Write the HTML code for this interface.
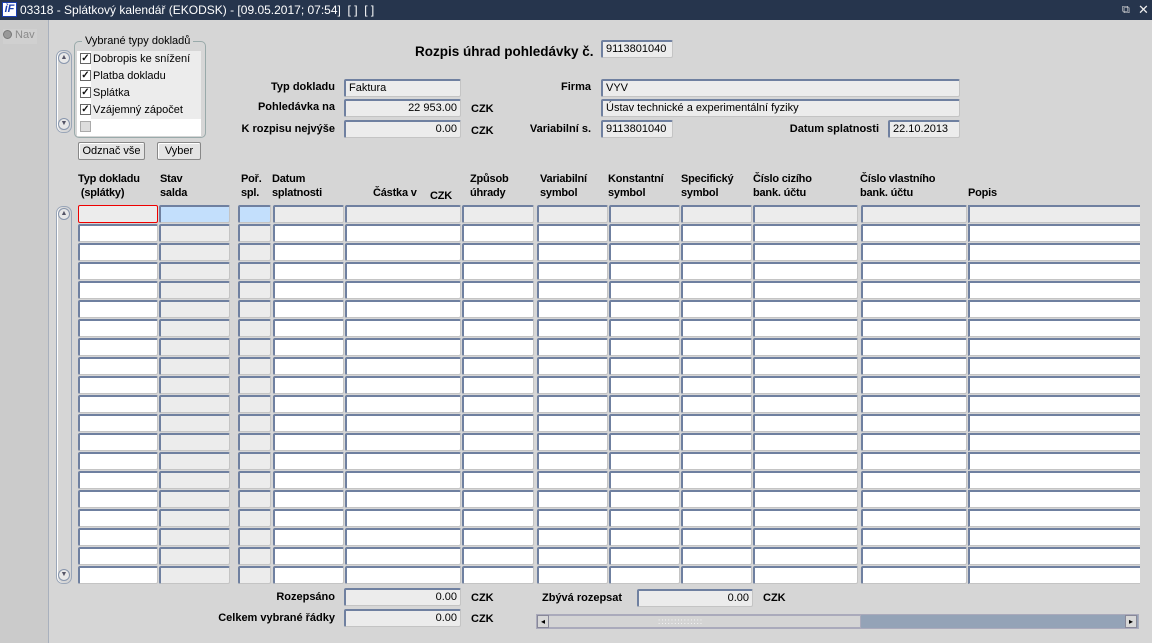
<!DOCTYPE html>
<html><head><meta charset="utf-8">
<style>
*{box-sizing:border-box;margin:0;padding:0}
body{width:1152px;height:643px;background:#d6d6d6;font-family:"Liberation Sans",Arial,sans-serif;font-size:11px;color:#000;position:relative;overflow:hidden}
.a{position:absolute}
.title{left:0;top:0;width:1152px;height:20px;background:#26354d;color:#fff;font-size:12px;line-height:20px;padding-left:20px}
.logo{left:2px;top:2px;width:15px;height:15px;background:#fff;border:1px solid #1a3fb0;color:#1a3fb0;font-weight:bold;font-style:italic;font-size:11px;line-height:13px;text-align:center}
.f{position:absolute;height:18px;border-top:2px solid #6f80a0;border-left:2px solid #6f80a0;border-right:1px solid #c4c4c4;border-bottom:1px solid #c4c4c4;border-radius:2px;background:#ececec;font-size:11px;line-height:14px;padding:0 3px;white-space:nowrap;overflow:hidden}
.w{background:#fff}
.b{background:#c3dffc}
.r{text-align:right}
.lb{position:absolute;font-weight:bold;font-size:11px;text-align:right;white-space:nowrap}
.h{position:absolute;font-family:"Liberation Sans Narrow","Liberation Sans",sans-serif;font-weight:bold;font-size:11px;letter-spacing:-0.2px;line-height:14px;white-space:nowrap}
.btn{position:absolute;height:18px;border:1px solid #888;border-radius:2px;background:#e4e4e4;text-align:center;line-height:16px;font-size:11px;box-shadow:inset 1px 1px 0 #fff}
.sb{position:absolute;width:16px;border:1px solid #9aa6b8;border-radius:7px;background:#d6d6d6;box-shadow:inset 1px 0 0 #fff}
.arr{position:absolute;left:1px;width:12px;height:12px;border:1px solid #8896ad;border-radius:6px;background:#e8e8e8;font-size:7px;color:#556;text-align:center;line-height:10px}
.chk{position:absolute;left:3px;width:11px;height:11px;border:1px solid #666;background:#fff;font-size:10px;line-height:9px;text-align:center;font-weight:bold;color:#111}
</style></head><body>
<div class="a title">03318 - Splátkový kalendář (EKODSK) - [09.05.2017; 07:54]&nbsp; [ ]&nbsp; [ ]</div>
<div class="a logo">ỉF</div>
<div class="a" style="left:1122px;top:4px;color:#ddd;font-size:11px">⧉</div>
<div class="a" style="left:1138px;top:2px;color:#eee;font-size:13px">✕</div>

<div class="a" style="left:0;top:20px;width:49px;height:623px;background:#cbcbcb;border-right:1px solid #a8b0bd"></div>
<div class="a" style="left:3px;top:29px;width:34px;height:15px;background:#d0d0d0;color:#8a8a8a;font-size:11px;line-height:13px"><span style="display:inline-block;width:9px;height:9px;border-radius:5px;background:#999;border:1px solid #777;vertical-align:-1px"></span> Nav</div>

<div class="a" style="left:74px;top:41px;width:132px;height:97px;border:1px solid #9aa;border-radius:5px"></div>
<div class="a" style="left:82px;top:35px;background:#d6d6d6;padding:0 3px;font-size:11px">Vybrané typy dokladů</div>
<div class="a" style="left:77px;top:51px;width:124px;height:68px;background:#ececec"></div>
<div class="a" style="left:77px;top:119px;width:124px;height:17px;background:#fff"></div>
<div class="a" style="left:77px;top:51px;width:14px;height:85px;background:#fff"></div>
<div class="a" style="left:77px;top:51px;width:124px;height:85px">
 <div class="chk" style="top:2px">✓</div><div class="a" style="left:16px;top:2px">Dobropis ke snížení</div>
 <div class="chk" style="top:19px">✓</div><div class="a" style="left:16px;top:19px">Platba dokladu</div>
 <div class="chk" style="top:36px">✓</div><div class="a" style="left:16px;top:36px">Splátka</div>
 <div class="chk" style="top:53px">✓</div><div class="a" style="left:16px;top:53px">Vzájemný zápočet</div>
 <div class="chk" style="top:70px;background:#ddd;border-color:#aaa"></div>
</div>
<div class="sb" style="left:56px;top:50px;height:83px"><div class="arr" style="top:1px">▲</div><div class="arr" style="top:67px">▼</div></div>
<div class="btn" style="left:78px;top:142px;width:67px">Odznač vše</div>
<div class="btn" style="left:157px;top:142px;width:44px">Vyber</div>

<div class="lb" style="left:415px;top:44px;font-size:13.5px">Rozpis úhrad pohledávky č.</div>
<div class="f" style="left:601px;top:40px;width:72px">9113801040</div>
<div class="lb" style="left:200px;top:81px;width:135px">Typ dokladu</div>
<div class="lb" style="left:200px;top:101px;width:135px">Pohledávka na</div>
<div class="lb" style="left:200px;top:123px;width:135px">K rozpisu nejvýše</div>
<div class="f" style="left:344px;top:79px;width:117px">Faktura</div>
<div class="f r" style="left:344px;top:99px;width:117px">22 953.00</div>
<div class="f r" style="left:344px;top:120px;width:117px">0.00</div>
<div class="lb" style="left:471px;top:103px">CZK</div>
<div class="lb" style="left:471px;top:125px">CZK</div>
<div class="lb" style="left:500px;top:81px;width:91px">Firma</div>
<div class="lb" style="left:500px;top:123px;width:91px">Variabilní s.</div>
<div class="f" style="left:601px;top:79px;width:359px">VYV</div>
<div class="f" style="left:601px;top:99px;width:359px">Ústav technické a experimentální fyziky</div>
<div class="f" style="left:601px;top:120px;width:72px">9113801040</div>
<div class="lb" style="left:760px;top:123px;width:119px">Datum splatnosti</div>
<div class="f" style="left:888px;top:120px;width:72px">22.10.2013</div>

<div class="h" style="left:78px;top:172px">Typ dokladu<br>&nbsp;(splátky)</div>
<div class="h" style="left:160px;top:172px">Stav<br>salda</div>
<div class="h" style="left:241px;top:172px">Poř.<br>spl.</div>
<div class="h" style="left:272px;top:172px">Datum<br>splatnosti</div>
<div class="h" style="left:373px;top:186px">Částka v</div>
<div class="h" style="left:430px;top:189px">CZK</div>
<div class="h" style="left:470px;top:172px">Způsob<br>úhrady</div>
<div class="h" style="left:540px;top:172px">Variabilní<br>symbol</div>
<div class="h" style="left:608px;top:172px">Konstantní<br>symbol</div>
<div class="h" style="left:681px;top:172px">Specifický<br>symbol</div>
<div class="h" style="left:753px;top:172px">Číslo cizího<br>bank. účtu</div>
<div class="h" style="left:860px;top:172px">Číslo vlastního<br>bank. účtu</div>
<div class="h" style="left:968px;top:186px">Popis</div>

<div class="sb" style="left:56px;top:206px;height:378px"><div class="arr" style="top:1px">▲</div><div class="arr" style="top:362px">▼</div></div>
<div id="grid"></div>

<div class="lb" style="left:200px;top:591px;width:135px">Rozepsáno</div>
<div class="lb" style="left:150px;top:612px;width:185px">Celkem vybrané řádky</div>
<div class="f r" style="left:344px;top:588px;width:117px">0.00</div>
<div class="f r" style="left:344px;top:609px;width:117px">0.00</div>
<div class="lb" style="left:471px;top:592px">CZK</div>
<div class="lb" style="left:471px;top:613px">CZK</div>
<div class="lb" style="left:542px;top:592px">Zbývá rozepsat</div>
<div class="f r" style="left:637px;top:589px;width:116px">0.00</div>
<div class="lb" style="left:763px;top:592px">CZK</div>
<div class="a" style="left:536px;top:614px;width:603px;height:15px;background:#94a3b7;border:1px solid #aab"></div>
<div class="a" style="left:537px;top:615px;width:324px;height:13px;background:#d4d4d4;border:1px solid #aab;color:#fff;font-size:8px;line-height:11px;padding-left:120px;letter-spacing:1px">::::::::::::::</div>
<div class="a" style="left:537px;top:615px;width:12px;height:13px;background:#d8d8d8;border:1px solid #889;font-size:8px;line-height:11px;text-align:center">◂</div>
<div class="a" style="left:1125px;top:615px;width:12px;height:13px;background:#d8d8d8;border:1px solid #889;font-size:8px;line-height:11px;text-align:center">▸</div>

<script>
var cols=[[78,80,'w'],[159,71,''],[238,33,''],[273,71,'w'],[345,116,'w'],[462,72,'w'],[537,71,'w'],[609,71,'w'],[681,71,'w'],[753,105,'w'],[861,106,'w'],[968,172,'w']];
var h='';
for(var r=0;r<20;r++){var y=205+r*19;
for(var c=0;c<cols.length;c++){var k=cols[c];var cl=k[2];var st='';
if(r==0){cl=(c==1||c==2)?'b':'';if(c==0)st='border:1px solid #e00;';}
if(c==11)st+='border-right:none;border-radius:0;';
h+='<div class="f '+cl+'" style="left:'+k[0]+'px;top:'+y+'px;width:'+k[1]+'px;'+st+'"></div>';}}
document.getElementById('grid').innerHTML=h;
</script>
</body></html>
